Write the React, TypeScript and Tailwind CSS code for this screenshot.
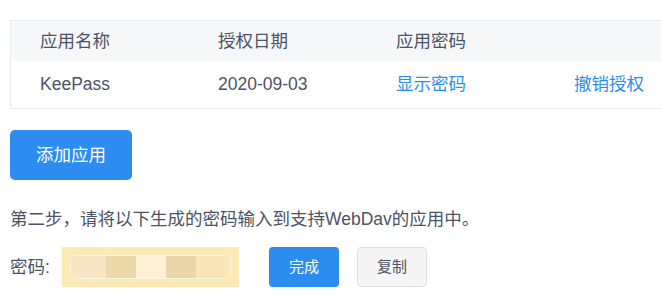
import React from 'react'

interface IAppRow {
  name: string
  date: string
}

const rows: IAppRow[] = [{ name: 'KeePass', date: '2020-09-03' }]

const font = { fontFamily: '"Liberation Sans", "Noto Sans CJK SC", sans-serif' }

const App: React.FC = () => {
  return (
    <div
      className="w-[661px] h-[306px] overflow-hidden bg-white text-[17.5px] text-[#4b5366] pl-[10px] pt-[20px]"
      style={font}
    >
      {/* app table, wider than the window */}
      <div className="w-[714px] border border-[#e8eaec]">
        <div className="flex h-[40px] items-center bg-[#f6f7f9]">
          <div className="w-[178px] pl-[29px]">应用名称</div>
          <div className="w-[178px] pl-[29px]">授权日期</div>
          <div className="w-[178px] pl-[29px]">应用密码</div>
          <div className="w-[178px] pl-[29px]"></div>
        </div>
        {rows.map((row, index) => (
          <div key={index} className="flex h-[47px] items-center bg-white">
            <div className="w-[178px] pl-[29px]">{row.name}</div>
            <div className="w-[178px] pl-[29px]">{row.date}</div>
            <div className="w-[178px] pl-[29px] text-[#2d8cf0]">显示密码</div>
            <div className="w-[178px] pl-[29px] text-[#2d8cf0]">撤销授权</div>
          </div>
        ))}
      </div>

      <button className="mt-[21px] flex h-[50px] w-[122px] items-center justify-center rounded-[5px] bg-[#2d8cf0] text-white">
        添加应用
      </button>

      <p className="mt-[27px] leading-[24px]">第二步，请将以下生成的密码输入到支持WebDav的应用中。</p>

      <div className="mt-[16px] flex items-center">
        <span className="w-[52px]">密码:</span>
        <div className="relative flex h-[40px] w-[177px] items-center bg-[#fde9b6]">
          {/* blurred password */}
          <div className="ml-[8px] flex h-[24px] overflow-hidden rounded-[8px] bg-white/60 p-[1px]">
            <div className="w-[35px] bg-[#f7e6c3]"></div>
            <div className="w-[30px] bg-[#ecd9aa]"></div>
            <div className="w-[30px] bg-[#fcf1d4]"></div>
            <div className="w-[30px] bg-[#e9d7a9]"></div>
            <div className="w-[34px] bg-[#f8e6b9]"></div>
          </div>
        </div>
        <button className="ml-[30px] flex h-[40px] w-[70px] items-center justify-center rounded-[4px] bg-[#2d8cf0] text-[15px] text-white">
          完成
        </button>
        <button className="ml-[18px] flex h-[40px] w-[70px] items-center justify-center rounded-[4px] border border-[#dcdee2] bg-[#f5f5f5] text-[15px] text-[#4b5366]">
          复制
        </button>
      </div>
    </div>
  )
}

export default App
